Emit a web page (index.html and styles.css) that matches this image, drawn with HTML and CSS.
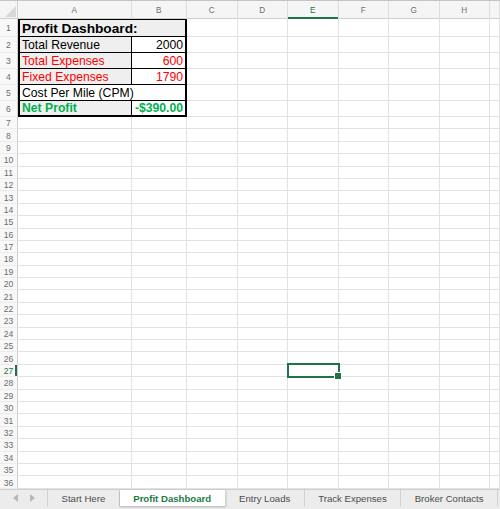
FILE: index.html
```html
<!DOCTYPE html>
<html>
<head>
<meta charset="utf-8">
<link rel="stylesheet" href="styles.css">
</head>
<body>
<div class="app">
  <div class="sheet">
    <div class="row row-head">
      <div class="corner"><svg class="corner-tri" width="18" height="18" viewBox="0 0 18 18"><polygon points="16,5 16,16 5,16" fill="#d8d8d8"/></svg></div>
      <div class="ch">A</div><div class="ch">B</div><div class="ch">C</div><div class="ch">D</div><div class="ch ch-active">E</div><div class="ch">F</div><div class="ch">G</div><div class="ch">H</div><div class="ch"></div>
    </div>
    <div class="row row-title">
      <div class="rh">1</div>
      <div class="t t-title">Profit Dashboard:</div>
      <span class="c"></span><span class="c"></span><span class="c"></span><span class="c"></span><span class="c"></span><span class="c"></span><span class="c"></span>
    </div>
    <div class="row row-data">
      <div class="rh">2</div>
      <div class="t t-label">Total Revenue</div><div class="t t-value">2000</div>
      <span class="c"></span><span class="c"></span><span class="c"></span><span class="c"></span><span class="c"></span><span class="c"></span><span class="c"></span>
    </div>
    <div class="row row-data">
      <div class="rh">3</div>
      <div class="t t-label red">Total Expenses</div><div class="t t-value red">600</div>
      <span class="c"></span><span class="c"></span><span class="c"></span><span class="c"></span><span class="c"></span><span class="c"></span><span class="c"></span>
    </div>
    <div class="row row-data">
      <div class="rh">4</div>
      <div class="t t-label red">Fixed Expenses</div><div class="t t-value red">1790</div>
      <span class="c"></span><span class="c"></span><span class="c"></span><span class="c"></span><span class="c"></span><span class="c"></span><span class="c"></span>
    </div>
    <div class="row row-data">
      <div class="rh">5</div>
      <div class="t t-wide">Cost Per Mile (CPM)</div>
      <span class="c"></span><span class="c"></span><span class="c"></span><span class="c"></span><span class="c"></span><span class="c"></span><span class="c"></span>
    </div>
    <div class="row row-data">
      <div class="rh">6</div>
      <div class="t t-label t-last green">Net Profit</div><div class="t t-value t-last green">-$390.00</div>
      <span class="c"></span><span class="c"></span><span class="c"></span><span class="c"></span><span class="c"></span><span class="c"></span><span class="c"></span>
    </div>
    <div class="row"><div class="rh">7</div><span class="c"></span><span class="c"></span><span class="c"></span><span class="c"></span><span class="c"></span><span class="c"></span><span class="c"></span><span class="c"></span><span class="c"></span></div>
    <div class="row"><div class="rh">8</div><span class="c"></span><span class="c"></span><span class="c"></span><span class="c"></span><span class="c"></span><span class="c"></span><span class="c"></span><span class="c"></span><span class="c"></span></div>
    <div class="row"><div class="rh">9</div><span class="c"></span><span class="c"></span><span class="c"></span><span class="c"></span><span class="c"></span><span class="c"></span><span class="c"></span><span class="c"></span><span class="c"></span></div>
    <div class="row"><div class="rh">10</div><span class="c"></span><span class="c"></span><span class="c"></span><span class="c"></span><span class="c"></span><span class="c"></span><span class="c"></span><span class="c"></span><span class="c"></span></div>
    <div class="row"><div class="rh">11</div><span class="c"></span><span class="c"></span><span class="c"></span><span class="c"></span><span class="c"></span><span class="c"></span><span class="c"></span><span class="c"></span><span class="c"></span></div>
    <div class="row"><div class="rh">12</div><span class="c"></span><span class="c"></span><span class="c"></span><span class="c"></span><span class="c"></span><span class="c"></span><span class="c"></span><span class="c"></span><span class="c"></span></div>
    <div class="row"><div class="rh">13</div><span class="c"></span><span class="c"></span><span class="c"></span><span class="c"></span><span class="c"></span><span class="c"></span><span class="c"></span><span class="c"></span><span class="c"></span></div>
    <div class="row"><div class="rh">14</div><span class="c"></span><span class="c"></span><span class="c"></span><span class="c"></span><span class="c"></span><span class="c"></span><span class="c"></span><span class="c"></span><span class="c"></span></div>
    <div class="row"><div class="rh">15</div><span class="c"></span><span class="c"></span><span class="c"></span><span class="c"></span><span class="c"></span><span class="c"></span><span class="c"></span><span class="c"></span><span class="c"></span></div>
    <div class="row"><div class="rh">16</div><span class="c"></span><span class="c"></span><span class="c"></span><span class="c"></span><span class="c"></span><span class="c"></span><span class="c"></span><span class="c"></span><span class="c"></span></div>
    <div class="row"><div class="rh">17</div><span class="c"></span><span class="c"></span><span class="c"></span><span class="c"></span><span class="c"></span><span class="c"></span><span class="c"></span><span class="c"></span><span class="c"></span></div>
    <div class="row"><div class="rh">18</div><span class="c"></span><span class="c"></span><span class="c"></span><span class="c"></span><span class="c"></span><span class="c"></span><span class="c"></span><span class="c"></span><span class="c"></span></div>
    <div class="row"><div class="rh">19</div><span class="c"></span><span class="c"></span><span class="c"></span><span class="c"></span><span class="c"></span><span class="c"></span><span class="c"></span><span class="c"></span><span class="c"></span></div>
    <div class="row"><div class="rh">20</div><span class="c"></span><span class="c"></span><span class="c"></span><span class="c"></span><span class="c"></span><span class="c"></span><span class="c"></span><span class="c"></span><span class="c"></span></div>
    <div class="row"><div class="rh">21</div><span class="c"></span><span class="c"></span><span class="c"></span><span class="c"></span><span class="c"></span><span class="c"></span><span class="c"></span><span class="c"></span><span class="c"></span></div>
    <div class="row"><div class="rh">22</div><span class="c"></span><span class="c"></span><span class="c"></span><span class="c"></span><span class="c"></span><span class="c"></span><span class="c"></span><span class="c"></span><span class="c"></span></div>
    <div class="row"><div class="rh">23</div><span class="c"></span><span class="c"></span><span class="c"></span><span class="c"></span><span class="c"></span><span class="c"></span><span class="c"></span><span class="c"></span><span class="c"></span></div>
    <div class="row"><div class="rh">24</div><span class="c"></span><span class="c"></span><span class="c"></span><span class="c"></span><span class="c"></span><span class="c"></span><span class="c"></span><span class="c"></span><span class="c"></span></div>
    <div class="row"><div class="rh">25</div><span class="c"></span><span class="c"></span><span class="c"></span><span class="c"></span><span class="c"></span><span class="c"></span><span class="c"></span><span class="c"></span><span class="c"></span></div>
    <div class="row"><div class="rh">26</div><span class="c"></span><span class="c"></span><span class="c"></span><span class="c"></span><span class="c"></span><span class="c"></span><span class="c"></span><span class="c"></span><span class="c"></span></div>
    <div class="row"><div class="rh rh-active">27</div><span class="c"></span><span class="c"></span><span class="c"></span><span class="c"></span><span class="c sel"></span><span class="c"></span><span class="c"></span><span class="c"></span><span class="c"></span></div>
    <div class="row"><div class="rh">28</div><span class="c"></span><span class="c"></span><span class="c"></span><span class="c"></span><span class="c"></span><span class="c"></span><span class="c"></span><span class="c"></span><span class="c"></span></div>
    <div class="row"><div class="rh">29</div><span class="c"></span><span class="c"></span><span class="c"></span><span class="c"></span><span class="c"></span><span class="c"></span><span class="c"></span><span class="c"></span><span class="c"></span></div>
    <div class="row"><div class="rh">30</div><span class="c"></span><span class="c"></span><span class="c"></span><span class="c"></span><span class="c"></span><span class="c"></span><span class="c"></span><span class="c"></span><span class="c"></span></div>
    <div class="row"><div class="rh">31</div><span class="c"></span><span class="c"></span><span class="c"></span><span class="c"></span><span class="c"></span><span class="c"></span><span class="c"></span><span class="c"></span><span class="c"></span></div>
    <div class="row"><div class="rh">32</div><span class="c"></span><span class="c"></span><span class="c"></span><span class="c"></span><span class="c"></span><span class="c"></span><span class="c"></span><span class="c"></span><span class="c"></span></div>
    <div class="row"><div class="rh">33</div><span class="c"></span><span class="c"></span><span class="c"></span><span class="c"></span><span class="c"></span><span class="c"></span><span class="c"></span><span class="c"></span><span class="c"></span></div>
    <div class="row"><div class="rh">34</div><span class="c"></span><span class="c"></span><span class="c"></span><span class="c"></span><span class="c"></span><span class="c"></span><span class="c"></span><span class="c"></span><span class="c"></span></div>
    <div class="row"><div class="rh">35</div><span class="c"></span><span class="c"></span><span class="c"></span><span class="c"></span><span class="c"></span><span class="c"></span><span class="c"></span><span class="c"></span><span class="c"></span></div>
    <div class="row"><div class="rh">36</div><span class="c"></span><span class="c"></span><span class="c"></span><span class="c"></span><span class="c"></span><span class="c"></span><span class="c"></span><span class="c"></span><span class="c"></span></div>
  </div>
  <div class="tabs">
    <div class="nav">
      <svg width="6" height="8" viewBox="0 0 6 8"><polygon points="5,0 5,8 0,4" fill="#b8b8b8"/></svg>
      <svg width="6" height="8" viewBox="0 0 6 8"><polygon points="1,0 1,8 6,4" fill="#b8b8b8"/></svg>
    </div>
    <div class="tab">Start Here</div>
    <div class="tab tab-active">Profit Dashboard</div>
    <div class="tab">Entry Loads</div>
    <div class="tab">Track Expenses</div>
    <div class="tab">Broker Contacts</div>
  </div>
</div>
</body>
</html>
```
FILE: styles.css
```css
* { box-sizing: border-box; margin: 0; padding: 0; }
html, body { width: 500px; height: 509px; overflow: hidden; background: #fff; }
body { font-family: "Liberation Sans", Arial, sans-serif; }

.app { display: flex; flex-direction: column; height: 509px; }
.sheet { flex: 1; overflow: hidden; }

.row {
  display: grid;
  grid-template-columns: 18px 113.5px 55.5px repeat(6, 50.5px) 1fr;
  height: 12.4px;
}
.row-head {
  height: 19px;
  background: #f5f5f5;
  border-top: 1px solid #c4c4c4;
  border-bottom: 1px solid #cfcfcf;
}
.row-title { height: 18px; }
.row-data { height: 16px; }

.corner { position: relative; border-right: 1px solid #d0d0d0; }
.corner-tri { display: block; }

.ch {
  border-right: 1px solid #dedede;
  font-size: 8.2px;
  color: #6e6e6e;
  display: flex;
  align-items: center;
  justify-content: center;
}
.ch-active { color: #217346; box-shadow: inset 0 -2px 0 #217346; }

.rh {
  background: #f8f8f8;
  border-right: 1px solid #cfcfcf;
  border-bottom: 1px solid #ececec;
  font-size: 8.6px;
  color: #6c6c6c;
  display: flex;
  align-items: center;
  justify-content: center;
  padding-top: 1px;
}
.rh-active { color: #217346; box-shadow: inset -2px 0 0 #217346; }

.c { border-right: 1px solid #e2e2e2; border-bottom: 1px solid #e2e2e2; }

.sel { position: relative; }
.sel::before {
  content: "";
  position: absolute;
  left: -1px; top: -2px; right: -2px; bottom: -2px;
  border: 2px solid #217346;
}
.sel::after {
  content: "";
  position: absolute;
  width: 6px; height: 6px;
  right: -4px; bottom: -4px;
  background: #217346;
  border: 1px solid #fff;
}

.t {
  display: flex;
  align-items: center;
  font-size: 12.2px;
  color: #000;
  padding: 0 2px 0 2px;
  white-space: nowrap;
  border-bottom: 1px solid #000;
}
.t-title {
  grid-column: span 2;
  background: #efefef;
  border: 1px solid #000;
  border-left-width: 2px;
  border-right-width: 2px;
  font-weight: bold;
  font-size: 13.7px;
}
.t-label { background: #efefef; border-left: 2px solid #000; border-right: 1px solid #000; }
.t-value { justify-content: flex-end; border-right: 2px solid #000; }
.t-wide { grid-column: span 2; border-left: 2px solid #000; border-right: 2px solid #000; }
.t-last { border-bottom-width: 2px; }
.red { color: #ff0000; }
.green { color: #00b050; font-weight: bold; }

.tabs {
  height: 20px;
  flex: none;
  display: flex;
  background: #ececec;
  border-top: 1px solid #cfcfcf;
  padding-bottom: 3px;
}
.nav {
  width: 48px;
  display: flex;
  align-items: center;
  justify-content: center;
  gap: 10px;
  border-right: 1px solid #d2d2d2;
}
.tab {
  padding: 0 13.5px;
  display: flex;
  align-items: center;
  font-size: 9.6px;
  color: #4d4d4d;
  border-right: 1px solid #d2d2d2;
  white-space: nowrap;
}
.tab-active {
  background: #fff;
  color: #1d7a42;
  font-weight: bold;
  box-shadow: 0 1px 2px rgba(0, 0, 0, 0.25);
}
```
